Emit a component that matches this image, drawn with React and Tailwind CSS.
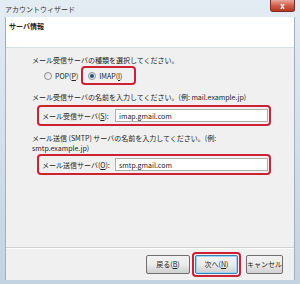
const font = { fontFamily: '"Noto Sans CJK JP", "Noto Sans", sans-serif' };

const Radio = ({ checked }) => (
    <span className="w-[8px] h-[8px] rounded-full border border-[#8e8f8f] bg-gradient-to-br from-[#dcdcdc] to-white flex items-center justify-center">
        {checked && <span className="w-[4px] h-[4px] rounded-full bg-[#1c5180]" />}
    </span>
);

const Field = ({ label, value }) => (
    <div className="ml-[5px] w-[234px] h-[21px] border-2 border-[#cc2233] rounded-[4px] flex items-center pl-[3px] pr-[1px]">
        <span className="w-[73px] shrink-0">{label}</span>
        <div className="flex-1 h-[13px] bg-white border border-[#abadb3] flex items-center pl-[3px]">
            {value}
        </div>
    </div>
);

const Button = ({ children, primary, className = '' }) => (
    <button
        type="button"
        className={`h-[19px] rounded-[2px] border bg-gradient-to-b from-[#f2f2f2] via-[#ebebeb] to-[#cfcfcf] flex items-center justify-center ${primary ? 'border-[#3c7fb1] shadow-[inset_0_0_0_1px_#9fd4f5]' : 'border-[#707070]'} ${className}`}
    >
        {children}
    </button>
);

export default function App() {
    return (
        <div style={font} className="w-[300px] h-[284px] overflow-hidden flex flex-col bg-gradient-to-b from-[#e4ecf3] via-[#d3dfea] to-[#c3d3e2] text-[7px] leading-[10px] text-[#222]">
            {/* Title bar */}
            <div className="h-[17px] shrink-0 flex justify-between pl-[5px] pr-[5px]">
                <span className="mt-[4px] text-[#333]">アカウントウィザード</span>
                <div className="w-[25px] h-[12px] rounded-b-[3px] border border-t-0 border-[#7a2d26] bg-gradient-to-b from-[#e8a89c] via-[#d0604c] to-[#b83420] flex items-center justify-center text-white font-bold text-[8px] leading-none">
                    x
                </div>
            </div>

            {/* Client */}
            <div className="mx-[5px] mb-[4px] flex-1 flex flex-col bg-[#f0f0f0] border-x border-[#9fb0c2]">
                <div className="h-[31px] shrink-0 bg-white border-b border-[#d5dfe5] pl-[3px] pt-[4px] font-bold">
                    サーバ情報
                </div>

                <div className="flex-1 flex flex-col pl-[26px] pt-[7px]">
                    <p>メール受信サーバの種類を選択してください。</p>
                    <div className="mt-[1px] h-[19px] flex items-center pl-[12px]">
                        <Radio />
                        <span className="ml-[3px]">POP(<u>P</u>)</span>
                        <div className="ml-[3px] h-[19px] w-[55px] border-2 border-[#cc2233] rounded-[4px] flex items-center pl-[5px]">
                            <Radio checked />
                            <span className="ml-[3px]">IMAP(<u>I</u>)</span>
                        </div>
                    </div>

                    <p className="mt-[7px]">メール受信サーバの名前を入力してください。(例: mail.example.jp)</p>
                    <div className="mt-[3px]">
                        <Field label={<>メール受信サーバ(<u>S</u>):</>} value="imap.gmail.com" />
                    </div>

                    <p className="mt-[7px] w-[240px]">メール送信 (SMTP) サーバの名前を入力してください。(例: smtp.example.jp)</p>
                    <div className="mt-[1px]">
                        <Field label={<>メール送信サーバ(<u>O</u>):</>} value="smtp.gmail.com" />
                    </div>
                </div>

                <div className="h-[33px] shrink-0 border-t border-[#d0d0d0] shadow-[inset_0_1px_0_#ffffff] flex items-center justify-end pr-[11px]">
                    <Button className="w-[44px]">戻る(<u>B</u>)</Button>
                    <div className="ml-[2px] border-2 border-[#cc2233] rounded-[4px] p-[1px]">
                        <Button primary className="w-[43px]">次へ(<u>N</u>)</Button>
                    </div>
                    <Button className="ml-[5px] w-[37px]">キャンセル</Button>
                </div>
            </div>
        </div>
    );
}
